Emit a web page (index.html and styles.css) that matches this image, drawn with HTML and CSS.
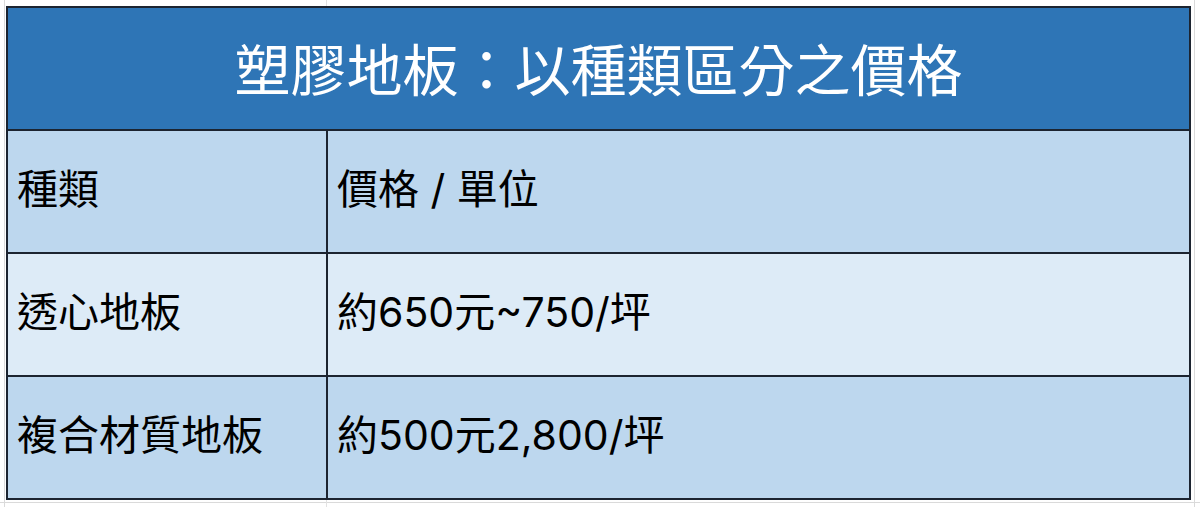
FILE: index.html
```html
<!DOCTYPE html>
<html lang="zh-Hant">
<head>
<meta charset="utf-8">
<title>塑膠地板：以種類區分之價格</title>
<link rel="stylesheet" href="styles.css">
</head>
<body>
<div class="sheet">
  <table class="price-table">
    <colgroup>
      <col class="col-type">
      <col class="col-price">
    </colgroup>
    <thead>
      <tr><th class="title" colspan="2">塑膠地板：以種類區分之價格</th></tr>
    </thead>
    <tbody>
      <tr class="row-dark"><td>種類</td><td>價格 / 單位</td></tr>
      <tr class="row-light"><td>透心地板</td><td>約650元~750/坪</td></tr>
      <tr class="row-dark"><td>複合材質地板</td><td>約500元2,800/坪</td></tr>
    </tbody>
  </table>
</div>
</body>
</html>
```

FILE: styles.css
```css
html, body {
  margin: 0;
  padding: 0;
}
body {
  width: 1200px;
  height: 507px;
  overflow: hidden;
  background-color: #ffffff;
  background-image:
    linear-gradient(to right, transparent 4px, #dadada 4px, #dadada 5px, transparent 5px),
    linear-gradient(to right, transparent 326px, #e2e2e2 326px, #e2e2e2 327px, transparent 327px),
    linear-gradient(to right, transparent 1194px, #dadada 1194px, #dadada 1195px, transparent 1195px),
    linear-gradient(to bottom, transparent 502px, #dadada 502px, #dadada 503px, transparent 503px);
  font-family: "Inter", "Noto Sans CJK TC", sans-serif;
}
.sheet {
  padding: 6px 0 0 6px;
}
.price-table {
  width: 1185px;
  border-collapse: collapse;
  table-layout: fixed;
}
.col-type {
  width: 320px;
}
.price-table th,
.price-table td {
  border: 2px solid #1c2430;
  padding: 0 0 4px 9px;
  text-align: left;
  vertical-align: middle;
  color: #000;
  font-weight: 400;
}
.price-table th.title {
  height: 117px;
  background: #2e75b6;
  color: #ffffff;
  text-align: center;
  font-size: 56px;
  padding: 0 0 4px 0;
}
.price-table tbody td {
  height: 117px;
  font-size: 41px;
  line-height: 1;
}
.row-dark td {
  background: #bdd7ee;
}
.row-light td {
  background: #ddebf7;
}
```
